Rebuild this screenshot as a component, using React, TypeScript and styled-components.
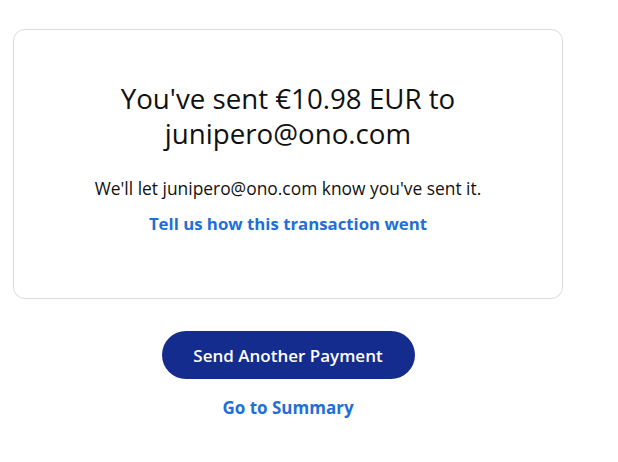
import React from "react";
import styled, { createGlobalStyle } from "styled-components";

const Global = createGlobalStyle`
  html, body { margin: 0; padding: 0; background: #ffffff; }
  body { font-family: "Open Sans", Lato, sans-serif; color: #000; }
`;

const Page = styled.div`
  width: 550px;
  padding: 29px 0 0 13px;
  display: flex;
  flex-direction: column;
  align-items: center;
`;

const Card = styled.section`
  box-sizing: border-box;
  width: 550px;
  height: 270px;
  border: 1px solid #dcdcdc;
  border-radius: 12px;
  display: flex;
  flex-direction: column;
  align-items: center;
  padding-top: 51px;
`;

const Heading = styled.h1`
  margin: 0;
  font-size: 27.7px;
  font-weight: 400;
  line-height: 35px;
  text-align: center;
  color: #111;
`;

const Body = styled.p`
  margin: 25px 0 0;
  font-size: 17.4px;
  line-height: 24px;
  color: #111;
`;

const Link = styled.a`
  margin-top: 12px;
  font-size: 16.8px;
  font-weight: 700;
  line-height: 24px;
  color: #1f6fd6;
  text-decoration: none;
`;

const Button = styled.button`
  margin-top: 32px;
  width: 253px;
  height: 48px;
  border: none;
  border-radius: 24px;
  background: #142c8e;
  color: #fff;
  font-family: inherit;
  font-size: 17px;
  font-weight: 600;
`;

const Summary = styled(Link)`
  margin-top: 17px;
  font-size: 17px;
`;

export default function App() {
  return (
    <>
      <Global />
      <Page>
        <Card>
          <Heading>
            You've sent €10.98 EUR to
            <br />
            junipero@ono.com
          </Heading>
          <Body>We'll let junipero@ono.com know you've sent it.</Body>
          <Link href="#">Tell us how this transaction went</Link>
        </Card>
        <Button>Send Another Payment</Button>
        <Summary href="#">Go to Summary</Summary>
      </Page>
    </>
  );
}
